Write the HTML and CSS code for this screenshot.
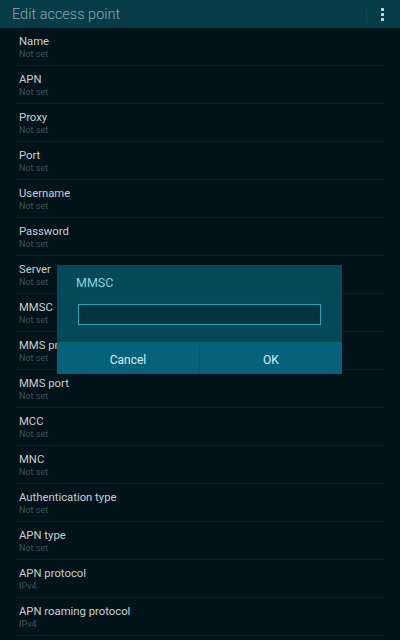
FILE: index.html
```html
<!DOCTYPE html>
<html>
<head>
<meta charset="utf-8">
<link rel="stylesheet" href="styles.css">
</head>
<body>
<div class="screen">
  <header class="bar">
    <div class="bar-title">Edit access point</div>
    <div class="bar-sep"></div>
    <div class="kebab"><span></span><span></span><span></span></div>
  </header>
  <ul class="list">
    <li class="row"><div class="t">Name</div><div class="s">Not set</div></li>
    <li class="row"><div class="t">APN</div><div class="s">Not set</div></li>
    <li class="row"><div class="t">Proxy</div><div class="s">Not set</div></li>
    <li class="row"><div class="t">Port</div><div class="s">Not set</div></li>
    <li class="row"><div class="t">Username</div><div class="s">Not set</div></li>
    <li class="row"><div class="t">Password</div><div class="s">Not set</div></li>
    <li class="row"><div class="t">Server</div><div class="s">Not set</div></li>
    <li class="row"><div class="t">MMSC</div><div class="s">Not set</div></li>
    <li class="row"><div class="t">MMS proxy</div><div class="s">Not set</div></li>
    <li class="row"><div class="t">MMS port</div><div class="s">Not set</div></li>
    <li class="row"><div class="t">MCC</div><div class="s">Not set</div></li>
    <li class="row"><div class="t">MNC</div><div class="s">Not set</div></li>
    <li class="row"><div class="t">Authentication type</div><div class="s">Not set</div></li>
    <li class="row"><div class="t">APN type</div><div class="s">Not set</div></li>
    <li class="row"><div class="t">APN protocol</div><div class="s">IPv4</div></li>
    <li class="row"><div class="t">APN roaming protocol</div><div class="s">IPv4</div></li>
  </ul>
  <div class="dialog">
    <div class="d-body">
      <div class="d-title">MMSC</div>
      <div class="d-input"></div>
    </div>
    <div class="d-buttons">
      <div class="d-btn">Cancel</div>
      <div class="d-btn">OK</div>
    </div>
  </div>
</div>
</body>
</html>
```
FILE: styles.css
```css
html, body {
  margin: 0;
  padding: 0;
  background: #03131a;
}
.screen {
  position: relative;
  width: 400px;
  height: 640px;
  overflow: hidden;
  background: #03131a;
  font-family: Roboto, "Liberation Sans", sans-serif;
}
.bar {
  height: 28px;
  background: #053c48;
  display: flex;
  align-items: center;
  padding-left: 12px;
}
.bar-title {
  flex: 1;
  color: #8aa8ad;
  font-size: 14.5px;
  font-weight: 300;
  padding-top: 1px;
}
.bar-sep {
  width: 1px;
  height: 16px;
  background: #0a4856;
  margin-right: 14px;
}
.kebab {
  width: 3px;
  margin-right: 16px;
  display: flex;
  flex-direction: column;
  gap: 2px;
}
.kebab span {
  display: block;
  width: 3px;
  height: 3px;
  background: #c4d2d6;
  border-radius: 0.5px;
}
.list {
  list-style: none;
  margin: 0;
  padding: 0 16px;
}
.row {
  height: 37px;
  border-bottom: 1px solid #0b2027;
  padding-left: 3px;
  box-sizing: content-box;
}
.t {
  color: #c7d0d3;
  font-size: 11.3px;
  line-height: 13px;
  padding-top: 7px;
}
.s {
  color: #3d5157;
  font-size: 9px;
  line-height: 11px;
  padding-top: 1px;
}
.dialog {
  position: absolute;
  left: 57px;
  top: 265px;
  width: 285px;
  height: 109px;
  display: flex;
  flex-direction: column;
}
.d-body {
  flex: 1;
  background: #03495a;
  padding: 11px 20px 0 19px;
}
.d-title {
  color: #88d3df;
  font-size: 12.5px;
  line-height: 14px;
}
.d-input {
  margin-top: 14px;
  margin-left: 2px;
  height: 19px;
  width: 241px;
  background: #03333f;
  border: 1.5px solid #2aa3bb;
}
.d-buttons {
  height: 32px;
  display: flex;
  background: #06627a;
}
.d-btn {
  flex: 1;
  display: flex;
  align-items: center;
  justify-content: center;
  color: #d6eef2;
  font-size: 12px;
  padding-top: 3px;
}
.d-btn + .d-btn {
  border-left: 1px solid #0a5567;
}
```
